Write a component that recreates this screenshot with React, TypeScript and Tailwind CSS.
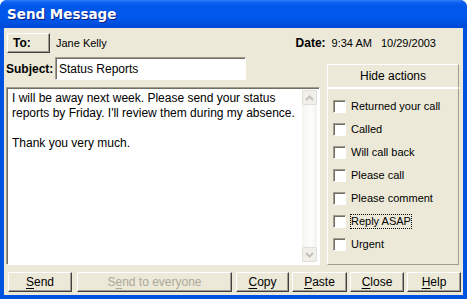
import React from "react";

const raised =
  "border border-t-white border-l-white border-b-[#404040] border-r-[#404040] shadow-[inset_-1px_-1px_#a09d90] bg-[#ece9d8]";
const sunken =
  "border border-t-[#a09d90] border-l-[#a09d90] border-b-white border-r-white shadow-[inset_1px_1px_#716f64]";

function Btn({ label, u, w, disabled }: { label: string; u: number; w: string; disabled?: boolean }) {
  return (
    <button
      className={`${raised} ${w} h-[20px] flex items-center justify-center text-[12px] ${
        disabled ? "text-[#aca899]" : "text-black"
      }`}
    >
      {label.slice(0, u)}
      <span className="underline underline-offset-2">{label[u]}</span>
      {label.slice(u + 1)}
    </button>
  );
}

const actions = [
  "Returned your call",
  "Called",
  "Will call back",
  "Please call",
  "Please comment",
  "Reply ASAP",
  "Urgent",
];

export default function App() {
  return (
    <div className="w-[467px] h-[299px] flex flex-col rounded-t-[7px] overflow-hidden bg-[#0052e0] font-['Liberation_Sans',Arial,sans-serif]">
      {/* title bar */}
      <div className="h-[28px] shrink-0 flex items-center pl-[7px] bg-[linear-gradient(to_bottom,#2f7cf8_0%,#0a5ff0_10%,#0056e8_25%,#0058ec_55%,#0052e2_80%,#0047d4_100%)]">
        <span className="text-white font-bold text-[13.5px] font-['DejaVu_Sans',sans-serif] [text-shadow:1px_1px_#0a1f80] pt-[1px]">
          Send Message
        </span>
      </div>

      {/* body */}
      <div className="flex-1 mx-[4px] mb-[4px] bg-[#ece9d8] flex flex-col px-[2px]">
        <div className="flex items-center mt-[5px] h-[20px]">
          <button className={`${raised} w-[43px] h-[20px] ml-[1px] text-[12px] font-bold text-left pl-[5px]`}>To:</button>
          <span className="ml-[6px] text-[11px] text-black">Jane Kelly</span>
          <span className="ml-auto mr-[25px] text-[11px] flex items-center">
            <b className="text-[12px] mr-[6px]">Date:</b>
            <span className="mr-[9px]">9:34 AM</span>
            <span>10/29/2003</span>
          </span>
        </div>

        <div className="flex mt-[4px]">
          <div className="w-[314px] flex flex-col">
            <div className="flex items-center h-[23px]">
              <b className="text-[12px] w-[49px]">Subject:</b>
              <div className={`${sunken} bg-white w-[191px] h-[23px] flex items-center pl-[3px] text-[12px]`}>
                Status Reports
              </div>
            </div>
            <div className={`${sunken} bg-white mt-[7px] h-[178px] flex`}>
              <div className="flex-1 pl-[5px] pt-[3px] pr-[2px] text-[12px] leading-[15px] text-black">
                <p>I will be away next week. Please send your status reports by Friday. I'll review them during my absence.</p>
                <p className="mt-[15px]">Thank you very much.</p>
              </div>
              <div className="w-[15px] mr-[2px] my-[2px] flex flex-col justify-between bg-[linear-gradient(to_right,#f5f4ef,#fefefe_60%,#f3f2ec)]">
                <div className="h-[15px] rounded-[2px] border border-[#e0dfd8] bg-[#f0efe9] flex items-center justify-center">
                  <svg width="9" height="6" viewBox="0 0 9 6"><path d="M1 5 L4.5 1.5 L8 5" stroke="#c4c2b8" strokeWidth="2" fill="none" /></svg>
                </div>
                <div className="h-[15px] rounded-[2px] border border-[#e0dfd8] bg-[#f0efe9] flex items-center justify-center">
                  <svg width="9" height="6" viewBox="0 0 9 6"><path d="M1 1 L4.5 4.5 L8 1" stroke="#c4c2b8" strokeWidth="2" fill="none" /></svg>
                </div>
              </div>
            </div>
          </div>

          <div className="ml-[7px] w-[132px] mt-[7px] flex flex-col">
            <button className={`${raised} h-[24px] text-[12px] shadow-none border-b-white border-r-[#a09d90]`}>Hide actions</button>
            <div className="h-[177px] border border-t-white border-l-white border-b-[#a09d90] border-r-[#a09d90] flex flex-col pt-[11px] pl-[5px] gap-[10px]">
              {actions.map((a) => (
                <label key={a} className="flex items-center h-[13px] text-[11px] text-black">
                  <span className={`${sunken} bg-white w-[13px] h-[13px] shrink-0`} />
                  <span
                    className={`ml-[5px] leading-[13px] ${
                      a === "Reply ASAP" ? "outline outline-1 outline-dotted outline-black" : ""
                    }`}
                  >
                    {a}
                  </span>
                </label>
              ))}
            </div>
          </div>
        </div>

        <div className="flex mt-[7px] ml-[2px] gap-[3px]">
          <Btn label="Send" u={0} w="w-[64px]" />
          <Btn label="Send to everyone" u={1} w="w-[155px] ml-[2px]" disabled />
          <Btn label="Copy" u={0} w="w-[53px] ml-[1px]" />
          <Btn label="Paste" u={0} w="w-[55px]" />
          <Btn label="Close" u={0} w="w-[54px]" />
          <Btn label="Help" u={0} w="w-[54px]" />
        </div>
      </div>
    </div>
  );
}
